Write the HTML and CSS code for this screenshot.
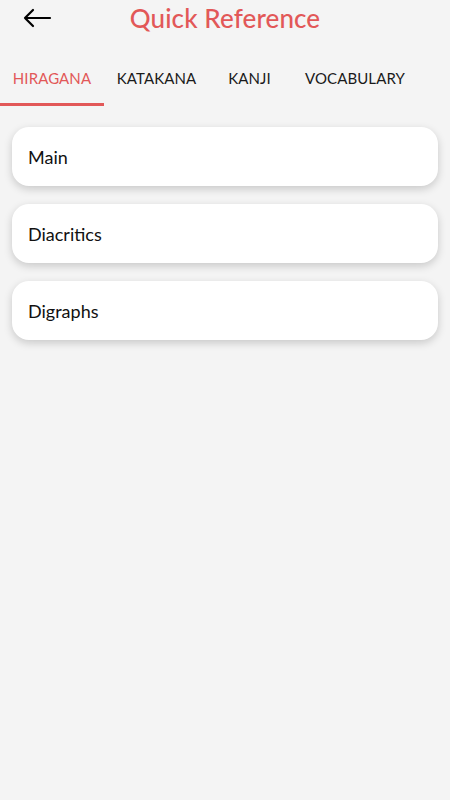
FILE: index.html
```
<!DOCTYPE html>
<html>
	<head>
		<meta charset="utf-8">
		<title>Quick Reference</title>
		<link rel="stylesheet" href="styles.css">
	</head>
	<body>
		<div id="header">
			<a id="back" href="#">
				<svg width="30" height="20" viewBox="0 0 30 20">
					<path d="M28 10 H3 M11 2 L3 10 L11 18" fill="none" stroke="#000" stroke-width="2.2" stroke-linecap="round" stroke-linejoin="round" />
				</svg>
			</a>
			<p id="title">Quick Reference</p>
		</div>

		<div id="tabs">
			<a class="tab active" href="#">HIRAGANA</a>
			<a class="tab" href="#">KATAKANA</a>
			<a class="tab" href="#">KANJI</a>
			<a class="tab" href="#">VOCABULARY</a>
		</div>

		<div id="list">
			<div class="card">Main</div>
			<div class="card">Diacritics</div>
			<div class="card">Digraphs</div>
		</div>
	</body>
</html>
```

FILE: styles.css
```
* {
	padding:0px;
	margin:0px;
	border:0px;
	box-sizing:border-box;

	font-family:Lato, "Noto Sans", sans-serif;
	text-decoration:none;
}

body {
	background-color:#f4f4f4;
	width:450px;
	min-height:800px;
}

#header {
	position:relative;
	height:36px;

	display:flex;
	justify-content:center;
	align-items:center;
}
	#back {
		position:absolute;
		left:22px;
		top:8px;
		display:block;
	}
	#title {
		color:#e25858;
		font-size:26px;
		font-weight:500;
		letter-spacing:0.1px;
	}

#tabs {
	margin-top:22px;
	height:48px;

	display:flex;
	align-items:stretch;
}
	.tab {
		display:flex;
		align-items:center;
		justify-content:center;

		color:#1a1a1a;
		font-size:15px;
		font-weight:400;
		letter-spacing:0.1px;

		border-bottom:3px solid transparent;
		padding-bottom:6px;
	}
	.tab:nth-child(1) { width:104px; }
	.tab:nth-child(2) { width:105px; }
	.tab:nth-child(3) { width:81px; }
	.tab:nth-child(4) { width:130px; }

	.tab.active {
		color:#e25858;
		border-bottom-color:#e25858;
	}

#list {
	padding:21px 12px 0px 12px;

	display:flex;
	flex-direction:column;
	gap:18px;
}
	.card {
		height:59px;
		padding-left:16px;

		background:#fff;
		border-radius:17px;
		box-shadow:0px 3px 8px rgba(0,0,0,0.18);

		display:flex;
		align-items:center;

		color:#111;
		font-size:18px;
	}
```
